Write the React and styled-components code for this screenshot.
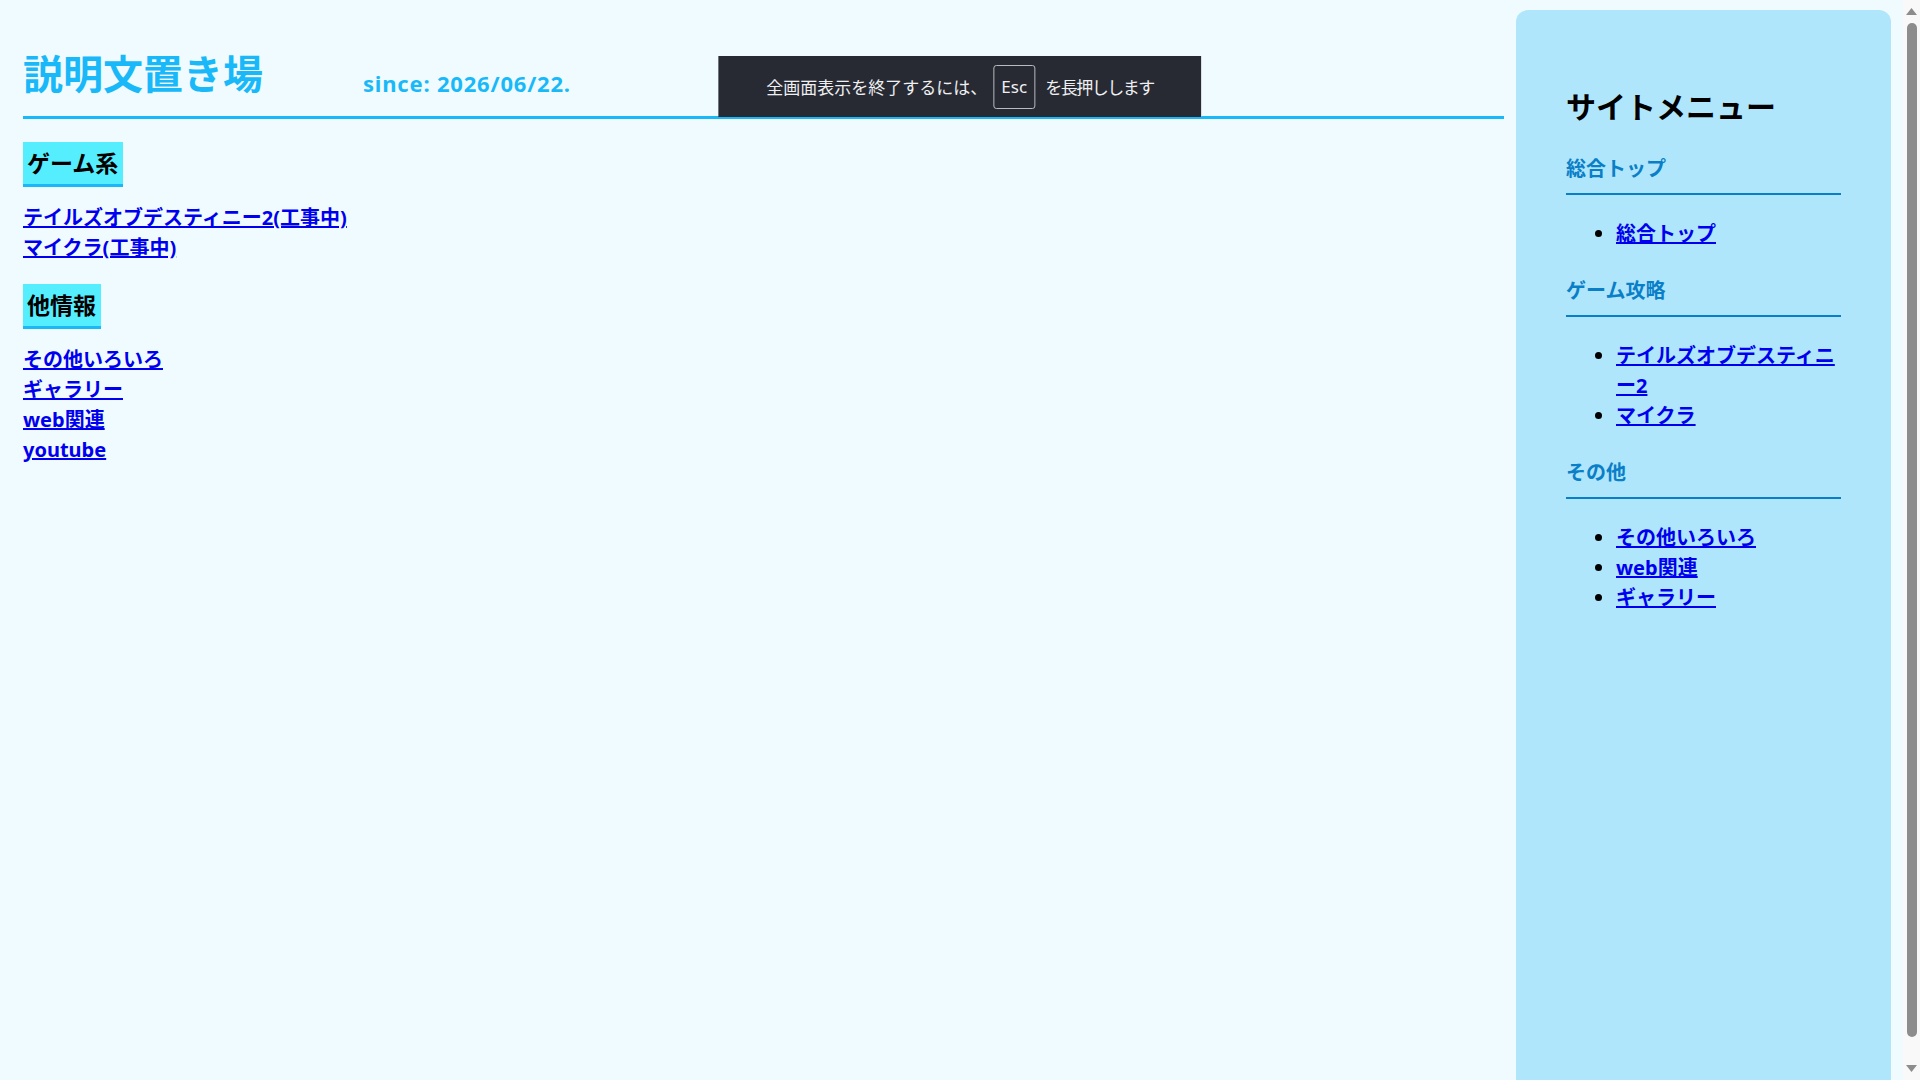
import React from 'react';
import styled, { createGlobalStyle } from 'styled-components';

const GlobalStyle = createGlobalStyle`
  html, body {
    margin: 0;
    height: 100%;
    overflow: hidden;
  }
  body {
    background-color: #f0fbff;
    font-family: "Noto Sans", "Noto Sans CJK JP", sans-serif;
    font-weight: 700;
    color: #000;
  }
`

const Shell = styled.div`
  display: flex;
  height: 100vh;
  overflow: hidden;
`

const Page = styled.div`
  flex: 1;
  display: flex;
  align-items: flex-start;
  gap: 12px;
  padding: 10px 12px 0 23px;
`

const Main = styled.main`
  flex: 1;
`

const Header = styled.header`
  display: flex;
  align-items: flex-end;
  gap: 100px;
  margin-top: 40px;
  padding-bottom: 18px;
  border-bottom: 3px solid #19b9f9;
  color: #19b9f9;
`

const Title = styled.h1`
  margin: 0;
  font-size: 40px;
  line-height: 48px;
  font-weight: 700;
`

const Since = styled.span`
  font-size: 22px;
  line-height: 29px;
  letter-spacing: 0.8px;
`

const Section = styled.section`
  margin-top: ${({first}) => first ? '23px' : '21px'};
`

const SectionTitle = styled.h2`
  display: inline-block;
  margin: 0 0 16px;
  padding: 4px 5px 4px 4px;
  font-size: 23px;
  line-height: 34px;
  background-color: #55eeff;
  border-bottom: 3px solid #19b9f9;
`

const LinkList = styled.div`
  display: flex;
  flex-direction: column;
  align-items: flex-start;
`

const TextLink = styled.a`
  font-size: 20px;
  line-height: 30px;
  color: #0000ee;
`

const Sidebar = styled.aside`
  width: 275px;
  min-height: calc(100vh + 40px);
  padding: 75px 50px 0;
  background-color: #b0e6fc;
  border-radius: 12px;
`

const MenuTitle = styled.h2`
  margin: 0 0 25px;
  font-size: 30px;
  line-height: 44px;
`

const MenuGroup = styled.h3`
  margin: 0;
  padding-bottom: 9px;
  font-size: 20px;
  line-height: 30px;
  color: #0a7fc7;
  border-bottom: 2px solid #0a7fc7;
`

const MenuList = styled.ul`
  margin: 24px 0 27px;
  padding-left: 50px;
  font-size: 20px;
  line-height: 30px;
`

const MenuLink = styled.a`
  color: #0000ee;
`

const Scrollbar = styled.div`
  width: 17px;
  display: flex;
  flex-direction: column;
  align-items: center;
  background-color: #f9f9f9;
`

const ArrowButton = styled.div`
  height: 17px;
  display: flex;
  align-items: ${({down}) => down ? 'flex-start' : 'flex-end'};
  justify-content: center;
  padding: ${({down}) => down ? '2px 0 0' : '0 0 2px'};
  box-sizing: border-box;
`

const Thumb = styled.div`
  flex: 1;
  width: 10px;
  margin: 6px 0 26px;
  border-radius: 5px;
  background-color: #8d8d8d;
`

// browser fullscreen hint floating over the top of the page
const Toast = styled.div`
  position: fixed;
  top: 56px;
  left: 50%;
  transform: translateX(-50%);
  height: 61px;
  display: flex;
  align-items: center;
  padding: 0 48px;
  background-color: #272a33;
  color: #eeeff1;
  font-size: 17px;
  font-weight: 400;
  white-space: nowrap;
`

const Key = styled.span`
  display: flex;
  align-items: center;
  height: 44px;
  box-sizing: border-box;
  padding: 0 7px;
  margin: 0 10px 0 6px;
  border: 1px solid #b9bbc0;
  border-radius: 3px;
`

const KeyHint = styled.span`
  letter-spacing: -1.5px;
`

const Arrow = ({ down }) => (
  <svg width="11" height="7" viewBox="0 0 11 7">
    <path d={down ? 'M0 0 H11 L5.5 7 Z' : 'M0 7 H11 L5.5 0 Z'} fill="#8d8d8d" />
  </svg>
)

const App = () => (
  <>
    <GlobalStyle />
    <Shell>
      <Page>
        <Main>
          <Header>
            <Title>説明文置き場</Title>
            <Since>since: 2026/06/22.</Since>
          </Header>

          <Section first>
            <SectionTitle>ゲーム系</SectionTitle>
            <LinkList>
              <TextLink href="#">テイルズオブデスティニー2(工事中)</TextLink>
              <TextLink href="#">マイクラ(工事中)</TextLink>
            </LinkList>
          </Section>

          <Section>
            <SectionTitle>他情報</SectionTitle>
            <LinkList>
              <TextLink href="#">その他いろいろ</TextLink>
              <TextLink href="#">ギャラリー</TextLink>
              <TextLink href="#">web関連</TextLink>
              <TextLink href="#">youtube</TextLink>
            </LinkList>
          </Section>
        </Main>

        <Sidebar>
          <MenuTitle>サイトメニュー</MenuTitle>

          <MenuGroup>総合トップ</MenuGroup>
          <MenuList>
            <li><MenuLink href="#">総合トップ</MenuLink></li>
          </MenuList>

          <MenuGroup>ゲーム攻略</MenuGroup>
          <MenuList>
            <li><MenuLink href="#">テイルズオブデスティニー2</MenuLink></li>
            <li><MenuLink href="#">マイクラ</MenuLink></li>
          </MenuList>

          <MenuGroup>その他</MenuGroup>
          <MenuList>
            <li><MenuLink href="#">その他いろいろ</MenuLink></li>
            <li><MenuLink href="#">web関連</MenuLink></li>
            <li><MenuLink href="#">ギャラリー</MenuLink></li>
          </MenuList>
        </Sidebar>
      </Page>

      <Scrollbar>
        <ArrowButton><Arrow /></ArrowButton>
        <Thumb />
        <ArrowButton down><Arrow down /></ArrowButton>
      </Scrollbar>
    </Shell>

    <Toast>
      全画面表示を終了するには、<Key>Esc</Key><KeyHint>を長押しします</KeyHint>
    </Toast>
  </>
);

export default App;
